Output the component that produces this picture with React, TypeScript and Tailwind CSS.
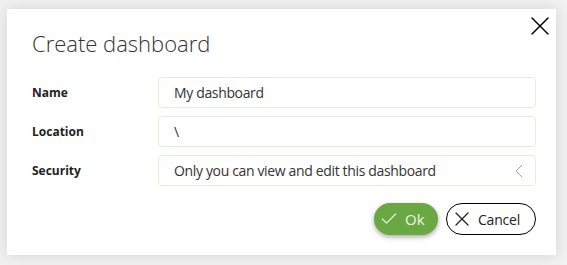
import { Check, X } from 'lucide-react'

const font = { fontFamily: '"Open Sans", "Noto Sans", sans-serif' }

function Field({ label, value, chevron }: { label: string; value: string; chevron?: boolean }) {
  return (
    <div className="flex items-center">
      <label className="w-[126px] shrink-0 text-[12px] font-bold text-[#222]">{label}</label>
      <div className="flex h-[31px] flex-1 items-center rounded-[4px] border border-[#e1eed8] pl-[15px] pr-[12px]">
        <span className="flex-1 text-[14px] tracking-[-0.35px] text-[#333]">{value}</span>
        {chevron && (
          <svg width="8" height="14" viewBox="0 0 8 14" className="text-[#a0a0a0]">
            <polyline points="7,1 1,7 7,13" fill="none" stroke="currentColor" strokeWidth="1" />
          </svg>
        )}
      </div>
    </div>
  )
}

export default function App() {
  return (
    <div className="h-[265px] w-[567px] bg-[#f1f1f1] pl-[7px] pt-[9px]" style={font}>
      <div className="relative flex h-[246px] w-[549px] flex-col bg-white pl-[25px] pr-[20px] pt-[21px] shadow-[0_0_14px_rgba(0,0,0,0.12)]">
        <button className="absolute right-0 top-[1px] text-black">
          <X className="h-[32px] w-[32px]" strokeWidth={1.1} />
        </button>

        <h1 className="text-[22px] font-light leading-[26px] text-[#333]">Create dashboard</h1>

        <div className="mt-[21px] flex flex-col gap-[8px]">
          <Field label="Name" value="My dashboard" />
          <Field label="Location" value="\" />
          <Field label="Security" value="Only you can view and edit this dashboard" chevron />
        </div>

        <div className="mt-[17px] flex justify-end gap-[8px]">
          <button className="flex h-[32px] w-[64px] items-center gap-[6px] rounded-full bg-[#6aa844] pl-[5px] text-[15px] text-[#eef5e8] shadow-[0_2px_5px_rgba(0,0,0,0.35)]">
            <Check className="h-[20px] w-[20px]" strokeWidth={1.3} />
            Ok
          </button>
          <button className="flex h-[32px] w-[90px] items-center gap-[4px] rounded-full border border-black bg-white pl-[3px] text-[14px] tracking-[-0.2px] text-[#222]">
            <X className="h-[24px] w-[24px]" strokeWidth={1.2} />
            Cancel
          </button>
        </div>
      </div>
    </div>
  )
}
